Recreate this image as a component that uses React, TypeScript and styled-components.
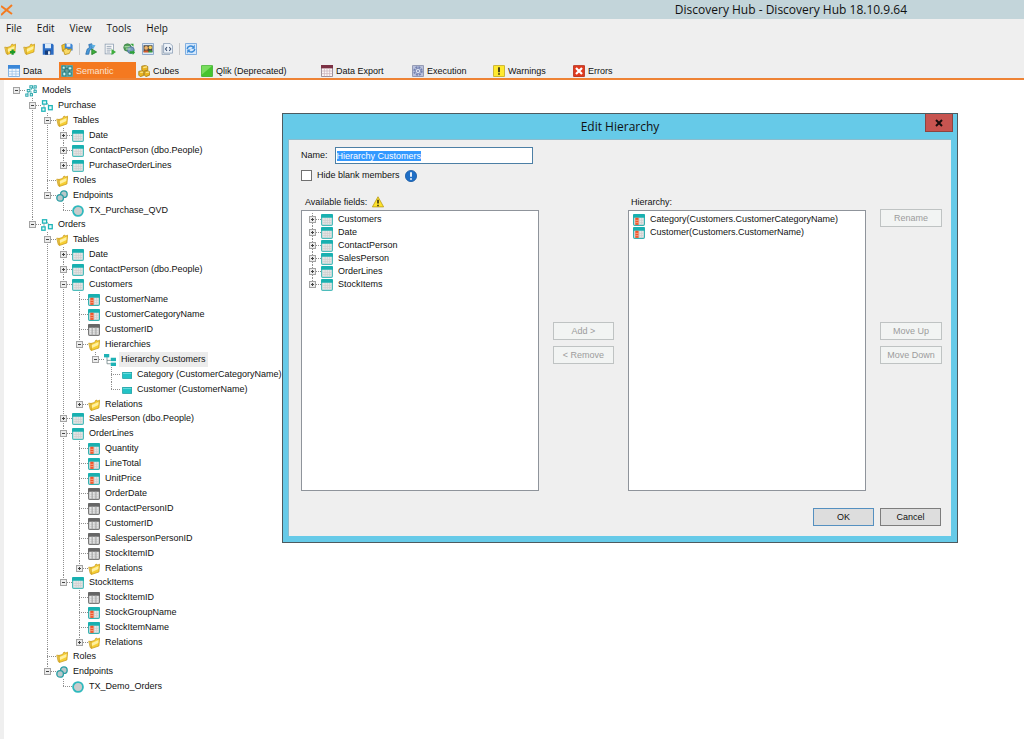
import React, { useEffect, useRef, useState } from "react";
import styled, { createGlobalStyle, css } from "styled-components";

const GlobalStyle = createGlobalStyle`
  * { box-sizing: border-box; }
  html, body, #root { height: 100%; }
  body {
    margin: 0;
    background: #fff;
    color: #111;
    font-family: "Liberation Sans", Arial, sans-serif;
    font-size: 9px;
    line-height: 15px;
  }
  button, input { font: inherit; color: inherit; }
  ul { list-style: none; margin: 0; padding: 0; }
`;

const uiFont = `"Open Sans", "Noto Sans", sans-serif`;

/* ---------- icons ---------- */

const Svg = styled.svg`
  display: block;
  flex: none;
  width: 12px;
  height: 12px;
`;

type IconName =
  | "models" | "model" | "folder" | "table" | "field" | "key" | "endpoints" | "endpoint"
  | "hierarchy" | "level" | "open" | "openFolder" | "save" | "saveAs" | "deploy" | "script"
  | "sync" | "users" | "code" | "refresh" | "data" | "semantic" | "cubes" | "qlik"
  | "export" | "gear" | "warn" | "error" | "info" | "caution";

const folderShape = (
  <>
    <path d="M1 5.500 L4 6 L4.500 15 L3 14 Z" fill="#f7dc6a" stroke="#c99a1a" strokeLinejoin="round" />
    <path d="M4 6 L9 4.500 L10 2 L12 1.500 L12.500 3 L15.500 1.500 L14.500 12 L4.500 15.300 Z" fill="#f6cf35" stroke="#c99a1a" strokeLinejoin="round" />
    <path d="M5 8 L14 4 L13.800 8 L5.300 12 Z" fill="#fff0a0" />
  </>
);

const grid = (head: string, edge: string) => (
  <>
    <rect x=".800" y=".800" width="14.400" height="14.400" rx="1.500" fill="#e6e6e6" stroke={edge} strokeWidth="1.600" />
    <path d="M2 8.500 H14 M2 11.500 H14 M5.500 5 V14 M8.500 5 V14 M11.500 5 V14" stroke="#cdcfcf" fill="none" />
    <path d="M0 5 V1.500 Q0 0 1.500 0 H14.500 Q16 0 16 1.500 V5 Z" fill={head} />
  </>
);

const art: Record<IconName, React.ReactNode> = {
  models: (
    <g fill="#dff8f8" stroke="#2aa5ab" strokeWidth="1.300">
      <path d="M3.500 12 L5 8 M9 4 L8 7 M11 4 L14 7 M8 12 V8" strokeWidth="1" />
      <rect x="6.500" y="1" width="3.500" height="3" /><rect x="12" y="1" width="3" height="3" />
      <rect x="3" y="6" width="3.500" height="3" /><rect x="12" y="7" width="3" height="3" />
      <rect x="1" y="12" width="3" height="3" /><rect x="7" y="11.500" width="3" height="3" />
    </g>
  ),
  model: (
    <g fill="#e2f8f8" stroke="#1fb5b9" strokeWidth="1.700">
      <path d="M4 6 V11 M8 4 L11 8" stroke="#7a9294" strokeWidth="1" fill="none" />
      <rect x="2" y="1" width="5.500" height="4.500" />
      <rect x="1" y="10.500" width="4.500" height="4.500" />
      <rect x="10" y="7.500" width="5" height="5.500" />
    </g>
  ),
  semantic: (
    <g>
      <rect width="16" height="16" rx="1" fill="#66a5a2" />
      <path d="M5 6 V10 M10 5 H5 M11 7 V10" stroke="#24585a" />
      <g fill="#c9f4f2" stroke="#0f7377">
        <rect x="1.500" y="1.500" width="4" height="4" /><rect x="9.500" y="2.500" width="5" height="4" />
        <rect x="2.500" y="9.500" width="4" height="5" /><rect x="9.500" y="9.500" width="4" height="4" />
      </g>
    </g>
  ),
  folder: folderShape,
  openFolder: folderShape,
  open: (
    <>
      {folderShape}
      <path d="M8 12 H15 M11.500 8.500 V15.500" stroke="#1f9a29" strokeWidth="3" />
    </>
  ),
  table: grid("#18b0b0", "#4dbcbb"),
  field: (
    <>
      {grid("#18b0b0", "#36b0b0")}
      <rect x="3" y="5" width="4.500" height="9.500" fill="#f0552a" />
      <path d="M3 8.500 H7.500 M3 11.500 H7.500" stroke="#fbb49a" />
    </>
  ),
  key: (
    <>
      {grid("#666666", "#787878")}
      <path d="M5.500 4.500 V15 M10.500 4.500 V15" stroke="#9b9b9b" strokeWidth="1.200" />
    </>
  ),
  endpoints: (
    <g fill="#b9c8ca" stroke="#2a9fa5" strokeWidth="1.800">
      <circle cx="10.500" cy="5.500" r="4.400" /><circle cx="5.500" cy="10.500" r="4.400" />
    </g>
  ),
  endpoint: <circle cx="8" cy="8" r="6.600" fill="#c9cccc" stroke="#2eb9bd" strokeWidth="2.400" />,
  hierarchy: (
    <>
      <path d="M4 4 V13 H9 M4 8.500 H9" fill="none" stroke="#6a7f80" />
      <g fill="#1eb2b5">
        <rect x="0" y="0" width="7" height="4.500" /><rect x="9" y="5" width="7" height="4.500" /><rect x="9" y="11.500" width="7" height="4.500" />
      </g>
    </>
  ),
  level: (
    <>
      <rect x="3.500" y="4.500" width="12" height="8" fill="#22c3c6" stroke="#169da1" />
      <path d="M4 6 H15" stroke="#7be2e3" />
    </>
  ),
  save: (
    <>
      <path d="M1 1 H14 L15.500 2.500 V15.500 H1 Z" fill="#2b6cc4" />
      <rect x="4" y="1" width="8" height="6" fill="#dcebf9" />
      <rect x="4" y="10" width="8" height="5.500" fill="#173c78" /><rect x="8" y="11" width="3" height="4.500" fill="#dfe9f6" />
    </>
  ),
  saveAs: (
    <>
      <path d="M1 3 L6 1 L7 10 L2 11 Z" fill="#f0c22f" stroke="#b98b0c" />
      <path d="M5 1 H14 L15.500 2.500 V10 H5 Z" fill="#3d86d4" /><rect x="7.500" y="1" width="5" height="4" fill="#eaf2fb" />
      <path d="M3 9 L8 7 L9 9 L14 8 L11 14 L5 15.500 Z" fill="#f8d967" stroke="#b98b0c" />
    </>
  ),
  deploy: (
    <>
      <path d="M1 15 L3 8 L6 6 L5 2 L9 1 L10 7 L6 10 L5 15 Z" fill="#4a9ad8" stroke="#2467a8" />
      <path d="M8 2 L14 3 L11 8 Z" fill="#5cb0e2" />
      <path d="M9 8 L15.500 12 L9 15.500 Z" fill="#3fae3c" stroke="#217d25" />
    </>
  ),
  script: (
    <>
      <rect x="1.500" y="1.500" width="11" height="13" fill="#fafafa" stroke="#8799ad" />
      <path d="M3.500 4.500 H10 M3.500 7 H10 M3.500 9.500 H9 M3.500 12 H8" stroke="#7c8ea3" />
      <path d="M10 8 L16 12 L10 16 Z" fill="#3fae3c" />
    </>
  ),
  sync: (
    <>
      <circle cx="6" cy="6" r="5" fill="#55a05b" stroke="#3b8044" /><circle cx="10.500" cy="9.500" r="4.500" fill="#7c9bc0" stroke="#426a95" />
      <path d="M2 5 H9 M4 8 H10" stroke="#b9e3b7" strokeWidth="1.500" />
      <path d="M9 11 H13 V9 L16 12.500 L13 16 V14 H9 Z M10 1 L14 1 L14 5 Z" fill="#2da336" />
    </>
  ),
  users: (
    <>
      <rect x=".500" y=".500" width="15" height="15" rx="1" fill="#dce9f7" stroke="#6188b8" />
      <rect x="2" y="3" width="12" height="9" fill="#4d4a46" />
      <circle cx="5.500" cy="6.500" r="2.500" fill="#f0b36c" /><circle cx="11" cy="6" r="2.300" fill="#f6cf5a" />
      <path d="M2 12.500 C2 8.500 9 8.500 9 12.500 Z" fill="#d65a2a" /><path d="M8.500 12.500 C9 8.500 14 8.500 14 12.500 Z" fill="#3a9b3e" />
    </>
  ),
  code: (
    <>
      <path d="M3.500 .500 H12 L15.500 4 V13.500 H3.500 Z" fill="#eef3f9" stroke="#7d93ad" />
      <path d="M1.500 3 V15.500 H12" fill="none" stroke="#7d93ad" />
      <path d="M8 5.500 L6 8 L8 10.500 M11 5.500 L13 8 L11 10.500" fill="none" stroke="#44597a" strokeWidth="1.500" />
    </>
  ),
  refresh: (
    <>
      <rect x=".500" y=".500" width="15" height="15" rx="1" fill="#d5e8fb" stroke="#4c8ed4" />
      <path d="M3 8 C3 4 8 3 11 5 M13 8 C13 12 8 13 5 11" fill="none" stroke="#3c8bd8" strokeWidth="2" />
      <path d="M13 2 V7.500 H8.500 Z M3 14 V8.500 H7.500 Z" fill="#3c8bd8" />
    </>
  ),
  data: (
    <>
      <rect x=".500" y=".500" width="15" height="15" rx="1" fill="#f3f8fd" stroke="#4c8fd0" />
      <rect width="16" height="5" fill="#3b87d8" />
      <path d="M1 8.500 H15 M1 12 H15 M5.500 5 V15 M10.500 5 V15" stroke="#9cc3ea" />
    </>
  ),
  cubes: (
    <g fill="#e8b422" stroke="#a3780c">
      <path d="M5 1.500 L10 .500 L13 2 V7 L7 8.500 L5 6.500 Z" />
      <path d="M1 8.500 L5 7.500 L7.500 9 V14 L3 15.500 L1 13.500 Z" />
      <path d="M8.500 8.500 L13 7.500 L15.500 9 V13.500 L10.500 15.500 L8.500 13.500 Z" />
      <path d="M7 3.500 L12 2.500 M3 10 L7 9.500 M10.500 10 L15 9.500" stroke="#fbe58b" strokeWidth="1.500" />
    </g>
  ),
  qlik: (
    <>
      <rect x=".500" y=".500" width="15" height="15" rx="1" fill="#45c42f" stroke="#36a92a" />
      <path d="M1 1 H15 L1 13 Z" fill="#79dc5d" />
    </>
  ),
  export: (
    <>
      <rect x=".500" y=".500" width="15" height="15" rx="1" fill="#fbf6f6" stroke="#69596b" />
      <rect width="16" height="4.500" fill="#7c3144" />
      <path d="M1 8 H15 M1 11.500 H15 M4.500 5 V15 M8 5 V15 M11.500 5 V15" stroke="#cbb4bd" />
    </>
  ),
  gear: (
    <>
      <rect x=".500" y=".500" width="15" height="15" rx="1" fill="#b9c1dc" stroke="#747c9c" />
      <circle cx="8" cy="8" r="5" fill="none" stroke="#7482b0" strokeWidth="2.500" strokeDasharray="2.500 1.430" />
      <circle cx="8" cy="8" r="3.500" fill="#dfe4f2" stroke="#7482b0" /><circle cx="8" cy="8" r="1.300" fill="#7482b0" />
    </>
  ),
  warn: (
    <>
      <rect x=".500" y=".500" width="15" height="15" rx="1" fill="#ffe92e" stroke="#b79c14" />
      <path d="M8 3 V9.500 M8 11 V13" stroke="#2a2510" strokeWidth="2.200" />
    </>
  ),
  error: (
    <>
      <rect x=".500" y=".500" width="15" height="15" rx="1" fill="#e03a1e" stroke="#a82411" />
      <path d="M4 4 L12 12 M12 4 L4 12" stroke="#fff" strokeWidth="3" />
    </>
  ),
  info: (
    <>
      <circle cx="8" cy="8" r="7.500" fill="#1f6fc6" stroke="#15569f" />
      <path d="M8 3 V9 M8 11 V13" stroke="#fff" strokeWidth="2.400" />
    </>
  ),
  caution: (
    <>
      <path d="M8 1 L15.500 14.500 H.500 Z" fill="#ffe32b" stroke="#b3960f" strokeLinejoin="round" />
      <path d="M8 5 V10 M8 11.500 V13.500" stroke="#1f1b08" strokeWidth="1.900" />
    </>
  ),
};

const Icon = ({ name }: { name: IconName }) => (
  <Svg viewBox="0 0 16 16" aria-hidden="true">{art[name]}</Svg>
);

/* ---------- window frame ---------- */

const Window = styled.div`
  display: flex;
  flex-direction: column;
  min-height: 100%;
  background: #efefef;
`;

const TitleBar = styled.header`
  display: flex;
  align-items: center;
  height: 19px;
  padding: 0 117px 0 1px;
  background: #c3d5da;
  font-family: ${uiFont};
  font-size: 12px;
  line-height: 19px;
`;

const AppTitle = styled.h1`
  margin: 0 0 0 auto;
  font: inherit;
`;

const MenuBar = styled.nav`
  display: flex;
  gap: 15px;
  height: 19px;
  padding-left: 6px;
  font-family: ${uiFont};
  font-size: 10px;
`;

const PlainButton = styled.button`
  display: flex;
  align-items: center;
  margin: 0;
  padding: 0;
  border: 0;
  background: none;
`;

const ToolBar = styled.div`
  display: flex;
  align-items: center;
  gap: 7px;
  height: 22px;
  padding-left: 4px;
`;

const Divider = styled.span`
  width: 1px;
  height: 12px;
  margin: 0 -2px 0 -1px;
  background: #c9c9c9;
`;

const Tabs = styled.div`
  display: flex;
  height: 20px;
  padding: 2px 0 0 6px;
  border-bottom: 2px solid #ee8335;
`;

const Tab = styled(PlainButton)<{ $width: number }>`
  gap: 3px;
  width: ${(p) => p.$width}px;
  padding: 2px 0 0 2px;
  line-height: 14px;
  &[aria-selected="true"] {
    background: #f47920;
    color: #fbe3d0;
  }
`;

const Workspace = styled.main`
  flex: 1;
  margin-left: 4px;
  padding: 3px 0 40px 9px;
  background: #fff;
`;

/* ---------- tree ---------- */

const Branch = styled.ul<{ $indent: number; $tight?: boolean }>`
  padding-left: ${(p) => p.$indent}px;
  margin-bottom: ${(p) => (p.$tight ? "-1px" : "0")};
`;

const Item = styled.li<{ $root: boolean }>`
  ${(p) =>
    !p.$root &&
    css`
      background: repeating-linear-gradient(to bottom, #8f8f8f 0 1px, transparent 1px 2px) 3px 0 / 1px 100% no-repeat;
      &:last-child { background-size: 1px 8px; }
    `}
`;

const Row = styled.div<{ $height: number }>`
  display: flex;
  align-items: center;
  height: ${(p) => p.$height}px;
`;

const Toggle = styled.button`
  display: block;
  flex: none;
  width: 7px;
  height: 7px;
  margin: 0;
  padding: 0;
  border: 1px solid #a3a3a3;
  background:
    linear-gradient(#444, #444) center / 3px 1px no-repeat,
    #ececec;
  &[aria-expanded="false"] {
    background:
      linear-gradient(#444, #444) center / 3px 1px no-repeat,
      linear-gradient(#444, #444) center / 1px 3px no-repeat,
      #ececec;
  }
`;

const Dash = styled.span<{ $leaf: boolean }>`
  flex: none;
  width: ${(p) => (p.$leaf ? 9 : 5)}px;
  height: 1px;
  margin-left: ${(p) => (p.$leaf ? 3 : 0)}px;
  background: repeating-linear-gradient(to right, #8f8f8f 0 1px, transparent 1px 2px);
`;

const NodeLabel = styled.span<{ $selected?: boolean }>`
  margin-left: 3px;
  padding: 0 2px;
  white-space: nowrap;
  background: ${(p) => (p.$selected ? "#ececec" : "none")};
`;

interface TreeNode {
  label: string;
  icon: IconName;
  children?: TreeNode[];
  closed?: boolean;
  selected?: boolean;
}

const leaf = (label: string, icon: IconName): TreeNode => ({ label, icon });
const shut = (label: string, icon: IconName): TreeNode => ({ label, icon, children: [], closed: true });

const models: TreeNode = {
  label: "Models",
  icon: "models",
  children: [
    {
      label: "Purchase",
      icon: "model",
      children: [
        {
          label: "Tables",
          icon: "folder",
          children: [
            shut("Date", "table"),
            shut("ContactPerson (dbo.People)", "table"),
            shut("PurchaseOrderLines", "table"),
          ],
        },
        leaf("Roles", "folder"),
        { label: "Endpoints", icon: "endpoints", children: [leaf("TX_Purchase_QVD", "endpoint")] },
      ],
    },
    {
      label: "Orders",
      icon: "model",
      children: [
        {
          label: "Tables",
          icon: "folder",
          children: [
            shut("Date", "table"),
            shut("ContactPerson (dbo.People)", "table"),
            {
              label: "Customers",
              icon: "table",
              children: [
                leaf("CustomerName", "field"),
                leaf("CustomerCategoryName", "field"),
                leaf("CustomerID", "key"),
                {
                  label: "Hierarchies",
                  icon: "folder",
                  children: [
                    {
                      label: "Hierarchy Customers",
                      icon: "hierarchy",
                      selected: true,
                      children: [
                        leaf("Category (CustomerCategoryName)", "level"),
                        leaf("Customer (CustomerName)", "level"),
                      ],
                    },
                  ],
                },
                shut("Relations", "folder"),
              ],
            },
            shut("SalesPerson (dbo.People)", "table"),
            {
              label: "OrderLines",
              icon: "table",
              children: [
                leaf("Quantity", "field"),
                leaf("LineTotal", "field"),
                leaf("UnitPrice", "field"),
                leaf("OrderDate", "key"),
                leaf("ContactPersonID", "key"),
                leaf("CustomerID", "key"),
                leaf("SalespersonPersonID", "key"),
                leaf("StockItemID", "key"),
                shut("Relations", "folder"),
              ],
            },
            {
              label: "StockItems",
              icon: "table",
              children: [
                leaf("StockItemID", "key"),
                leaf("StockGroupName", "field"),
                leaf("StockItemName", "field"),
                shut("Relations", "folder"),
              ],
            },
          ],
        },
        leaf("Roles", "folder"),
        { label: "Endpoints", icon: "endpoints", children: [leaf("TX_Demo_Orders", "endpoint")] },
      ],
    },
  ],
};

const TreeItem = ({ node, root = false, rowHeight = 15 }: { node: TreeNode; root?: boolean; rowHeight?: number }) => {
  const [open, setOpen] = useState(!node.closed);
  const tight = node.icon === "model" || node.icon === "table";
  return (
    <Item $root={root}>
      <Row $height={rowHeight}>
        {node.children && (
          <Toggle
            type="button"
            aria-expanded={open}
            aria-label={`Toggle ${node.label}`}
            onClick={() => setOpen(!open)}
          />
        )}
        <Dash $leaf={!node.children} />
        <Icon name={node.icon} />
        <NodeLabel $selected={node.selected}>{node.label}</NodeLabel>
      </Row>
      {open && node.children && node.children.length > 0 && (
        <Branch $indent={node.icon === "model" ? 15 : 16} $tight={tight}>
          {node.children.map((child) => (
            <TreeItem key={child.label} node={child} rowHeight={rowHeight} />
          ))}
        </Branch>
      )}
    </Item>
  );
};

/* ---------- dialog ---------- */

const Dialog = styled.section`
  position: absolute;
  left: 282px;
  top: 113px;
  display: flex;
  flex-direction: column;
  width: 676px;
  padding: 0 6px 6px 5px;
  border: 1px solid #4d5a5f;
  background: #66cae8;
`;

const DialogHeader = styled.header`
  display: grid;
  grid-template-columns: 28px 1fr 28px;
  align-items: start;
  height: 25px;
  margin: 0 -2px 0 -1px;
  font-family: ${uiFont};
`;

const DialogTitle = styled.h2`
  grid-column: 2;
  margin: 0;
  font-size: 12px;
  font-weight: 400;
  line-height: 25px;
  text-align: center;
`;

const CloseButton = styled.button`
  display: flex;
  align-items: center;
  justify-content: center;
  width: 28px;
  height: 18px;
  padding: 0;
  border: 1px solid #8d4440;
  border-top: 0;
  background: #c75450;
`;

const DialogBody = styled.form`
  display: flex;
  flex-direction: column;
  padding: 7px 10px 10px 12px;
  border: 1px solid #8cbccd;
  border-width: 1px 0 0 1px;
  background: #efefef;
`;

const NameRow = styled.div`
  display: flex;
  align-items: center;
  gap: 7px;
  height: 17px;
`;

const NameInput = styled.input`
  width: 198px;
  height: 17px;
  padding: 0 1px;
  border: 1px solid #4c7fa5;
  background: #fff;
  outline: none;
  &::selection { background: #3399ff; color: #fff; }
`;

const CheckRow = styled.div`
  display: flex;
  align-items: center;
  gap: 5px;
  height: 15px;
  margin-top: 4px;
`;

const CheckBox = styled.input`
  appearance: none;
  width: 11px;
  height: 11px;
  margin: 0;
  border: 1px solid #707070;
  background: #fff;
  &:checked { background: #3399ff; }
`;

const Columns = styled.div`
  display: grid;
  grid-template-columns: 238px 61px 238px 62px;
  column-gap: 14px;
  margin-top: 11px;
`;

const Column = styled.div`
  display: flex;
  flex-direction: column;
`;

const ListCaption = styled.div<{ $inset: number }>`
  display: flex;
  align-items: center;
  gap: 5px;
  height: 16px;
  padding-left: ${(p) => p.$inset}px;
`;

const ListBox = styled.div<{ $inset: number }>`
  height: 281px;
  padding: 2px 0 0 ${(p) => p.$inset}px;
  border: 1px solid #8f949b;
  background: #fff;
`;

const PushButton = styled.button`
  width: 100%;
  height: 18px;
  margin: 0;
  padding: 0;
  border: 1px solid #7d7d7d;
  background: #dddddd;
  line-height: 15px;
  text-align: center;
  &:disabled {
    border-color: #bfc3c3;
    background: #f2f4f3;
    color: #9c9c9c;
  }
`;

const OkButton = styled(PushButton)`
  border-color: #5590c0;
`;

const ButtonStack = styled.div<{ $top: number }>`
  display: flex;
  flex-direction: column;
  gap: 6px;
  margin-top: ${(p) => p.$top}px;
`;

const DialogFooter = styled.footer`
  display: grid;
  grid-template-columns: 61px 61px;
  justify-content: end;
  gap: 6px;
  margin-top: 17px;
`;

const fieldTables: TreeNode[] = ["Customers", "Date", "ContactPerson", "SalesPerson", "OrderLines", "StockItems"].map(
  (name) => shut(name, "table"),
);

const hierarchyLevels = ["Category(Customers.CustomerCategoryName)", "Customer(Customers.CustomerName)"];

const EditHierarchy = () => {
  const nameRef = useRef<HTMLInputElement>(null);
  useEffect(() => {
    nameRef.current?.focus();
    nameRef.current?.select();
  }, []);
  return (
    <Dialog role="dialog" aria-labelledby="dialog-title">
      <DialogHeader>
        <DialogTitle id="dialog-title">Edit Hierarchy</DialogTitle>
        <CloseButton type="button" aria-label="Close">
          <svg width="8" height="8" viewBox="0 0 8 8" aria-hidden="true">
            <path d="M1 1 L7 7 M7 1 L1 7" stroke="#1a0d0d" strokeWidth="2" />
          </svg>
        </CloseButton>
      </DialogHeader>
      <DialogBody onSubmit={(e) => e.preventDefault()}>
        <NameRow>
          <label htmlFor="hierarchy-name">Name:</label>
          <NameInput id="hierarchy-name" ref={nameRef} defaultValue="Hierarchy Customers" />
        </NameRow>
        <CheckRow>
          <CheckBox id="hide-blank" type="checkbox" />
          <label htmlFor="hide-blank">Hide blank members</label>
          <Icon name="info" />
        </CheckRow>
        <Columns>
          <Column>
            <ListCaption $inset={4}>
              Available fields:
              <Icon name="caution" />
            </ListCaption>
            <ListBox $inset={7}>
              <ul>
                {fieldTables.map((t) => (
                  <TreeItem key={t.label} node={t} rowHeight={13} />
                ))}
              </ul>
            </ListBox>
          </Column>
          <Column>
            <ButtonStack $top={128}>
              <PushButton type="button" disabled>Add &gt;</PushButton>
              <PushButton type="button" disabled>&lt; Remove</PushButton>
            </ButtonStack>
          </Column>
          <Column>
            <ListCaption $inset={3}>Hierarchy:</ListCaption>
            <ListBox $inset={4}>
              <ul>
                {hierarchyLevels.map((level) => (
                  <li key={level}>
                    <Row $height={13}>
                      <Icon name="field" />
                      <NodeLabel>{level}</NodeLabel>
                    </Row>
                  </li>
                ))}
              </ul>
            </ListBox>
          </Column>
          <Column>
            <ButtonStack $top={15}>
              <PushButton type="button" disabled>Rename</PushButton>
            </ButtonStack>
            <ButtonStack $top={95}>
              <PushButton type="button" disabled>Move Up</PushButton>
              <PushButton type="button" disabled>Move Down</PushButton>
            </ButtonStack>
          </Column>
        </Columns>
        <DialogFooter>
          <OkButton type="submit">OK</OkButton>
          <PushButton type="button">Cancel</PushButton>
        </DialogFooter>
      </DialogBody>
    </Dialog>
  );
};

/* ---------- page ---------- */

const tools: [IconName, string][][] = [
  [["open", "New project"], ["openFolder", "Open project"], ["save", "Save"], ["saveAs", "Save as"]],
  [["deploy", "Deploy"], ["script", "Run script"], ["sync", "Synchronize"], ["users", "Users"], ["code", "Code"]],
  [["refresh", "Refresh"]],
];

const tabs: { label: string; icon: IconName; width: number }[] = [
  { label: "Data", icon: "data", width: 53 },
  { label: "Semantic", icon: "semantic", width: 77 },
  { label: "Cubes", icon: "cubes", width: 63 },
  { label: "Qlik (Deprecated)", icon: "qlik", width: 120 },
  { label: "Data Export", icon: "export", width: 91 },
  { label: "Execution", icon: "gear", width: 81 },
  { label: "Warnings", icon: "warn", width: 80 },
  { label: "Errors", icon: "error", width: 60 },
];

export default function App() {
  const [active, setActive] = useState("Semantic");
  return (
    <Window>
      <GlobalStyle />
      <TitleBar>
        <svg width="12" height="12" viewBox="0 0 12 12" aria-hidden="true">
          <path d="M0 2 L11 10 M11 1 L0 11" stroke="#f47b20" strokeWidth="2" />
        </svg>
        <AppTitle>Discovery Hub - Discovery Hub 18.10.9.64</AppTitle>
      </TitleBar>
      <MenuBar aria-label="Main menu">
        {["File", "Edit", "View", "Tools", "Help"].map((m) => (
          <PlainButton key={m} type="button">{m}</PlainButton>
        ))}
      </MenuBar>
      <ToolBar role="toolbar" aria-label="Project tools">
        {tools.map((group, i) => (
          <React.Fragment key={i}>
            {i > 0 && <Divider />}
            {group.map(([icon, label]) => (
              <PlainButton key={label} type="button" aria-label={label}>
                <Icon name={icon} />
              </PlainButton>
            ))}
          </React.Fragment>
        ))}
      </ToolBar>
      <Tabs role="tablist">
        {tabs.map((t) => (
          <Tab
            key={t.label}
            type="button"
            role="tab"
            aria-selected={t.label === active}
            $width={t.width}
            onClick={() => setActive(t.label)}
          >
            <Icon name={t.icon} />
            {t.label}
          </Tab>
        ))}
      </Tabs>
      <Workspace>
        <ul>
          <TreeItem node={models} root />
        </ul>
      </Workspace>
      <EditHierarchy />
    </Window>
  );
}
